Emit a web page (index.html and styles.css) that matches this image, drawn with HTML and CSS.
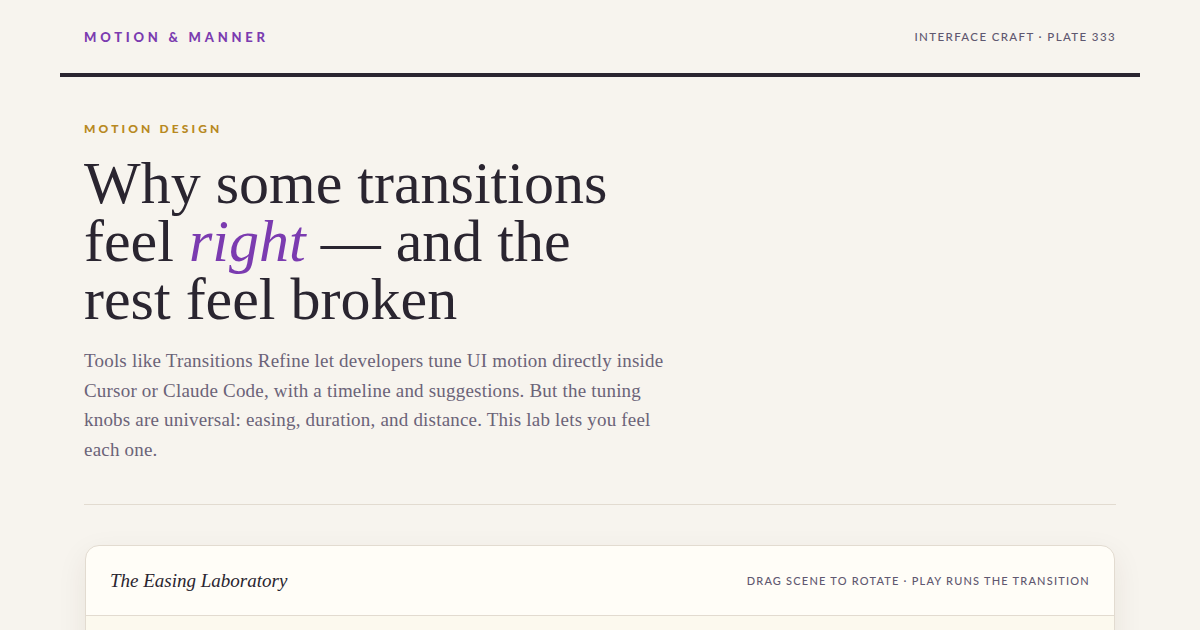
FILE: index.html
```html
<!DOCTYPE html>
<html lang="en">
<head>
<meta charset="utf-8">
<title>Motion &amp; Manner</title>
<link rel="stylesheet" href="styles.css">
</head>
<body>
<div class="page">
  <header class="masthead">
    <div class="brand">MOTION &amp; MANNER</div>
    <div class="plate">INTERFACE CRAFT · PLATE 333</div>
  </header>
  <main class="main">
    <div class="eyebrow">MOTION DESIGN</div>
    <h1 class="title">Why some transitions feel <em>right</em> — and the rest feel broken</h1>
    <p class="lede">Tools like Transitions Refine let developers tune UI motion directly inside Cursor or Claude Code, with a timeline and suggestions. But the tuning knobs are universal: easing, duration, and distance. This lab lets you feel each one.</p>
    <hr class="divider">
    <section class="lab">
      <div class="lab-head">
        <div class="lab-title">The Easing Laboratory</div>
        <div class="lab-hint">DRAG SCENE TO ROTATE · PLAY RUNS THE TRANSITION</div>
      </div>
      <div class="lab-body"></div>
    </section>
  </main>
</div>
</body>
</html>
```

FILE: styles.css
```css
* { box-sizing: border-box; }
html, body { margin: 0; padding: 0; }
body {
  background: #f7f4ee;
  color: #2a2530;
  font-family: "Liberation Serif", "Times New Roman", serif;
  height: 630px;
  overflow: hidden;
}
.page {
  width: 1080px;
  margin: 0 auto;
}
.masthead {
  height: 77px;
  padding: 0 24px;
  border-bottom: 4px solid #2a2530;
  display: flex;
  align-items: center;
  justify-content: space-between;
}
.brand {
  font-family: "Lato", "DejaVu Sans", sans-serif;
  font-weight: 900;
  font-size: 13px;
  letter-spacing: 0.29em;
  color: #7b3bb0;
}
.plate {
  font-family: "Lato", "DejaVu Sans", sans-serif;
  font-weight: 500;
  font-size: 11.5px;
  letter-spacing: 0.12em;
  color: #5f5870;
}
.main {
  padding: 44px 24px 0;
}
.eyebrow {
  font-family: "Lato", "DejaVu Sans", sans-serif;
  font-weight: 900;
  font-size: 12px;
  line-height: 16px;
  letter-spacing: 0.26em;
  color: #b8891f;
}
.title {
  margin: 17px 0 0;
  max-width: 560px;
  font-weight: 400;
  font-size: 60px;
  line-height: 58px;
  color: #2a2530;
}
.title em {
  font-style: italic;
  color: #7b3bb0;
}
.lede {
  margin: 18px 0 0;
  max-width: 590px;
  font-size: 19px;
  line-height: 29.5px;
  letter-spacing: 0.2px;
  color: #6b6378;
}
.divider {
  margin: 40px 0 0;
  border: 0;
  border-top: 1px solid #e2dbd0;
}
.lab {
  margin: 40px 1px 0;
  background: #fffdf7;
  border: 1px solid #e2dbd0;
  border-radius: 14px;
  box-shadow: 0 10px 30px rgba(60, 40, 20, 0.08);
  overflow: hidden;
}
.lab-head {
  height: 70px;
  padding: 0 24px;
  border-bottom: 1px solid #e2dbd0;
  display: flex;
  align-items: center;
  justify-content: space-between;
}
.lab-title {
  font-style: italic;
  font-size: 19px;
  color: #2a2530;
}
.lab-hint {
  font-family: "Lato", "DejaVu Sans", sans-serif;
  font-weight: 500;
  font-size: 11px;
  letter-spacing: 0.11em;
  color: #5f5870;
}
.lab-body {
  height: 200px;
  background: #fcf9ee;
}
```
